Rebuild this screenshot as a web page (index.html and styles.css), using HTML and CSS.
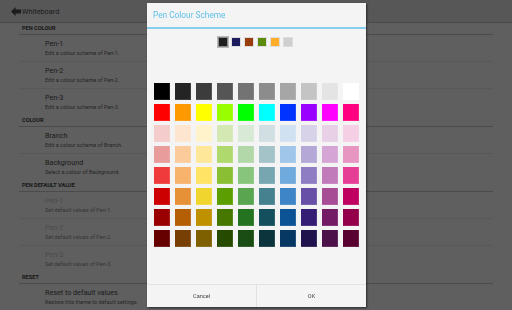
FILE: index.html
```html
<!DOCTYPE html>
<html>
<head>
<meta charset="utf-8">
<link rel="stylesheet" href="styles.css">
</head>
<body>
<header class="actionbar">
  <svg class="back" viewBox="0 0 10 9"><polygon points="0,4.5 4.6,0 4.6,2.6 10,2.6 10,6.4 4.6,6.4 4.6,9"/></svg>
  <span class="apptitle">Whiteboard</span>
</header>
<main class="prefs">
  <section>
    <h2 class="cat">PEN COLOUR</h2>
    <div class="item"><div class="t">Pen-1</div><div class="s">Edit a colour scheme of Pen-1.</div></div>
    <div class="item"><div class="t">Pen-2</div><div class="s">Edit a colour scheme of Pen-2.</div></div>
    <div class="item"><div class="t">Pen-3</div><div class="s">Edit a colour scheme of Pen-3.</div></div>
  </section>
  <section>
    <h2 class="cat">COLOUR</h2>
    <div class="item"><div class="t">Branch</div><div class="s">Edit a colour scheme of Branch.</div></div>
    <div class="item"><div class="t">Background</div><div class="s">Select a colour of Background.</div></div>
  </section>
  <section>
    <h2 class="cat">PEN DEFAULT VALUE</h2>
    <div class="item disabled"><div class="t">Pen-1</div><div class="s">Set default values of Pen-1.</div></div>
    <div class="item disabled"><div class="t">Pen-2</div><div class="s">Set default values of Pen-2.</div></div>
    <div class="item disabled"><div class="t">Pen-3</div><div class="s">Set default values of Pen-3.</div></div>
  </section>
  <section>
    <h2 class="cat">RESET</h2>
    <div class="item"><div class="t">Reset to default values</div><div class="s">Restore this theme to default settings.</div></div>
  </section>
</main>

<div class="dialog">
  <div class="dtitle">Pen Colour Scheme</div>
  <div class="current">
    <span class="mini selected" style="background:#1e1e1e"></span>
    <span class="mini" style="background:#1c1c5e"></span>
    <span class="mini" style="background:#993d0a"></span>
    <span class="mini" style="background:#5b8a0c"></span>
    <span class="mini" style="background:#ffad2a"></span>
    <span class="mini" style="background:#cfcfcf"></span>
  </div>
  <div class="grid">
    <span class="sw" style="background:#000000"></span>
    <span class="sw" style="background:#242424"></span>
    <span class="sw" style="background:#3c3c3c"></span>
    <span class="sw" style="background:#555555"></span>
    <span class="sw" style="background:#737373"></span>
    <span class="sw" style="background:#8c8c8c"></span>
    <span class="sw" style="background:#a6a6a6"></span>
    <span class="sw" style="background:#c4c4c4"></span>
    <span class="sw" style="background:#e4e4e4"></span>
    <span class="sw" style="background:#ffffff"></span>

    <span class="sw" style="background:#ff0000"></span>
    <span class="sw" style="background:#ff9900"></span>
    <span class="sw" style="background:#ffff00"></span>
    <span class="sw" style="background:#99ff00"></span>
    <span class="sw" style="background:#00ff00"></span>
    <span class="sw" style="background:#00ffff"></span>
    <span class="sw" style="background:#0033ff"></span>
    <span class="sw" style="background:#9900ff"></span>
    <span class="sw" style="background:#ff00ff"></span>
    <span class="sw" style="background:#ff0080"></span>

    <span class="sw" style="background:#f4cccc"></span>
    <span class="sw" style="background:#fde5cf"></span>
    <span class="sw" style="background:#fff3cc"></span>
    <span class="sw" style="background:#d3e8b3"></span>
    <span class="sw" style="background:#d8ead5"></span>
    <span class="sw" style="background:#d1dfe3"></span>
    <span class="sw" style="background:#d0e2f2"></span>
    <span class="sw" style="background:#d8d2e8"></span>
    <span class="sw" style="background:#e8d0e7"></span>
    <span class="sw" style="background:#f5d0e5"></span>

    <span class="sw" style="background:#e99c9c"></span>
    <span class="sw" style="background:#fbcb9c"></span>
    <span class="sw" style="background:#fee799"></span>
    <span class="sw" style="background:#afd96c"></span>
    <span class="sw" style="background:#b2d7a9"></span>
    <span class="sw" style="background:#a3c3c9"></span>
    <span class="sw" style="background:#a0c6e9"></span>
    <span class="sw" style="background:#b4a8d6"></span>
    <span class="sw" style="background:#d5a6d5"></span>
    <span class="sw" style="background:#e795c1"></span>

    <span class="sw" style="background:#ef3b3b"></span>
    <span class="sw" style="background:#f7b26c"></span>
    <span class="sw" style="background:#ffe364"></span>
    <span class="sw" style="background:#8abf34"></span>
    <span class="sw" style="background:#88c57c"></span>
    <span class="sw" style="background:#77a6b0"></span>
    <span class="sw" style="background:#70aadc"></span>
    <span class="sw" style="background:#8f7dc3"></span>
    <span class="sw" style="background:#c27bba"></span>
    <span class="sw" style="background:#e63e94"></span>

    <span class="sw" style="background:#cc0000"></span>
    <span class="sw" style="background:#e69138"></span>
    <span class="sw" style="background:#f1d52f"></span>
    <span class="sw" style="background:#5c9e00"></span>
    <span class="sw" style="background:#5aa650"></span>
    <span class="sw" style="background:#45818e"></span>
    <span class="sw" style="background:#3d85c6"></span>
    <span class="sw" style="background:#674ea7"></span>
    <span class="sw" style="background:#a64d96"></span>
    <span class="sw" style="background:#c00060"></span>

    <span class="sw" style="background:#990000"></span>
    <span class="sw" style="background:#b45f06"></span>
    <span class="sw" style="background:#bf9000"></span>
    <span class="sw" style="background:#467800"></span>
    <span class="sw" style="background:#247320"></span>
    <span class="sw" style="background:#134f5c"></span>
    <span class="sw" style="background:#0b5394"></span>
    <span class="sw" style="background:#351c75"></span>
    <span class="sw" style="background:#741b66"></span>
    <span class="sw" style="background:#94004a"></span>

    <span class="sw" style="background:#660000"></span>
    <span class="sw" style="background:#783f04"></span>
    <span class="sw" style="background:#7f6000"></span>
    <span class="sw" style="background:#264a00"></span>
    <span class="sw" style="background:#1a4d14"></span>
    <span class="sw" style="background:#0c343d"></span>
    <span class="sw" style="background:#073763"></span>
    <span class="sw" style="background:#20124d"></span>
    <span class="sw" style="background:#4c1148"></span>
    <span class="sw" style="background:#5a0030"></span>
  </div>
  <div class="buttons">
    <div class="btn">Cancel</div>
    <div class="btn">OK</div>
  </div>
</div>
</body>
</html>
```

FILE: styles.css
```css
html, body {
  margin: 0;
  padding: 0;
}
body {
  width: 512px;
  height: 310px;
  overflow: hidden;
  background: #5f5f5f;
  font-family: Roboto, "Noto Sans", "DejaVu Sans", sans-serif;
}
.actionbar {
  height: 22px;
  background: #575757;
  border-bottom: 1px solid #4a4a4a;
  display: flex;
  align-items: center;
  padding-left: 11px;
  gap: 1px;
}
.back {
  width: 10px;
  height: 9px;
  fill: #1c1c1c;
}
.apptitle {
  font-size: 7.3px;
  color: #1b1b1b;
}
.prefs {
  margin: 0 19px;
}
.cat {
  margin: 0;
  height: 11px;
  line-height: 11px;
  padding-left: 3px;
  font-size: 5.6px;
  font-weight: 700;
  color: #151515;
  border-bottom: 1px solid #4b4b4b;
}
.item {
  height: 22px;
  padding: 4px 0 0 26px;
  border-bottom: 1px solid #585858;
}
.item:last-child {
  border-bottom: none;
}
.t {
  font-size: 7.2px;
  line-height: 10px;
  color: #1a1a1a;
}
.s {
  font-size: 5.5px;
  line-height: 8px;
  color: #262626;
}
.disabled .t {
  color: #4a4a4a;
}
.disabled .s {
  color: #363636;
}
.dialog {
  position: fixed;
  left: 147px;
  top: 3px;
  width: 219px;
  height: 304px;
  background: #f4f4f4;
  box-shadow: 1px 1px 2px rgba(0, 0, 0, 0.55);
  display: flex;
  flex-direction: column;
}
.dtitle {
  height: 24px;
  line-height: 25px;
  padding-left: 6px;
  font-size: 8.3px;
  color: #5fc0ea;
  border-bottom: 2px solid #86ceee;
}
.current {
  display: flex;
  justify-content: center;
  gap: 3px;
  margin-top: 8px;
  padding-right: 2px;
}
.mini {
  width: 10px;
  height: 10px;
  box-sizing: border-box;
  border: 1px solid #dedede;
}
.mini.selected {
  border: 1px solid #8a8a8a;
  box-shadow: 0 0 0 1px #b8b8b8;
}
.grid {
  margin-top: 36px;
  display: grid;
  grid-template-columns: repeat(10, 16px);
  grid-template-rows: repeat(8, 17px);
  gap: 4px 5px;
  justify-content: center;
}
.sw {
  display: block;
  box-shadow: inset -1px -1px 0 rgba(255, 255, 255, 0.12);
}
.buttons {
  margin-top: auto;
  height: 22px;
  border-top: 1px solid #e2e2e2;
  display: flex;
}
.btn {
  flex: 1;
  display: flex;
  align-items: center;
  justify-content: center;
  font-size: 5.6px;
  color: #444444;
}
.btn + .btn {
  border-left: 1px solid #e2e2e2;
}
```
